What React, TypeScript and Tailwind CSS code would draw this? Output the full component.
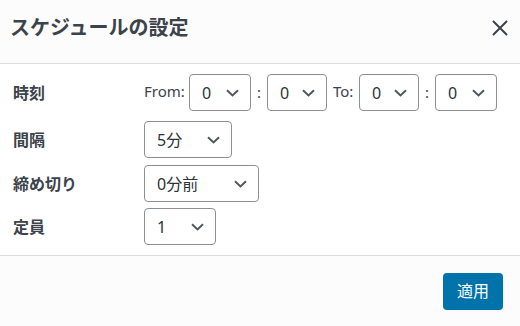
import React from 'react';

const FONT = "font-['Noto_Sans','Noto_Sans_CJK_JP',sans-serif]";

function Chevron() {
  return (
    <svg width="13" height="8" viewBox="0 0 13 8" fill="none" className="shrink-0">
      <path d="M1 1.2L6.5 6.4L12 1.2" stroke="#50575e" strokeWidth="2" />
    </svg>
  );
}

function Select({ value, width }: { value: string; width: string }) {
  return (
    <div
      className={`${width} h-[37px] flex items-center justify-between pl-[12px] pr-[11px] border border-[#8c8f94] rounded-[4px] bg-white text-[16px] text-[#2c3338]`}
    >
      <span>{value}</span>
      <Chevron />
    </div>
  );
}

function Row({ label, className, children }: { label: string; className: string; children: React.ReactNode }) {
  return (
    <div className={`flex items-center ${className}`}>
      <div className="w-[144px] pl-[13px] text-[16px] font-bold text-[#3c434a]">{label}</div>
      {children}
    </div>
  );
}

export default function App() {
  return (
    <div className={`w-[520px] h-[326px] flex flex-col bg-white ${FONT}`}>
      {/* Header */}
      <div className="h-[64px] shrink-0 flex items-center justify-between pl-[10px] pr-[12px] pb-[8px] bg-[#fcfcfc] border-b border-[#dcdcde]">
        <h1 className="text-[20px] font-bold text-[#3c434a]">スケジュールの設定</h1>
        <button className="p-[0px]" title="Close">
          <svg width="16" height="16" viewBox="0 0 16 16" fill="none">
            <path d="M1 1L15 15M15 1L1 15" stroke="#3c434a" strokeWidth="2" />
          </svg>
        </button>
      </div>

      {/* Body */}
      <div className="flex-1 flex flex-col">
        <Row label="時刻" className="mt-[10px]">
          <span className="w-[40px] text-[15px] text-[#3c434a] mb-[3px]">From:</span>
          <div className="ml-[5px]">
            <Select value="0" width="w-[62px]" />
          </div>
          <span className="w-[16px] text-center text-[15px] text-[#3c434a]">:</span>
          <Select value="0" width="w-[60px]" />
          <span className="ml-[6px] w-[20px] text-[15px] text-[#3c434a] mb-[3px]">To:</span>
          <div className="ml-[6px]">
            <Select value="0" width="w-[60px]" />
          </div>
          <span className="w-[16px] text-center text-[15px] text-[#3c434a]">:</span>
          <Select value="0" width="w-[62px]" />
        </Row>
        <Row label="間隔" className="mt-[10px]">
          <Select value="5分" width="w-[88px]" />
        </Row>
        <Row label="締め切り" className="mt-[7px]">
          <Select value="0分前" width="w-[115px]" />
        </Row>
        <Row label="定員" className="mt-[6px]">
          <Select value="1" width="w-[72px]" />
        </Row>
      </div>

      {/* Footer */}
      <div className="h-[71px] shrink-0 flex items-center justify-end pr-[17px] bg-[#fcfcfc] border-t border-[#dcdcde]">
        <button className="w-[60px] h-[37px] rounded-[4px] bg-[#0073aa] text-white text-[16px]">適用</button>
      </div>
    </div>
  );
}
